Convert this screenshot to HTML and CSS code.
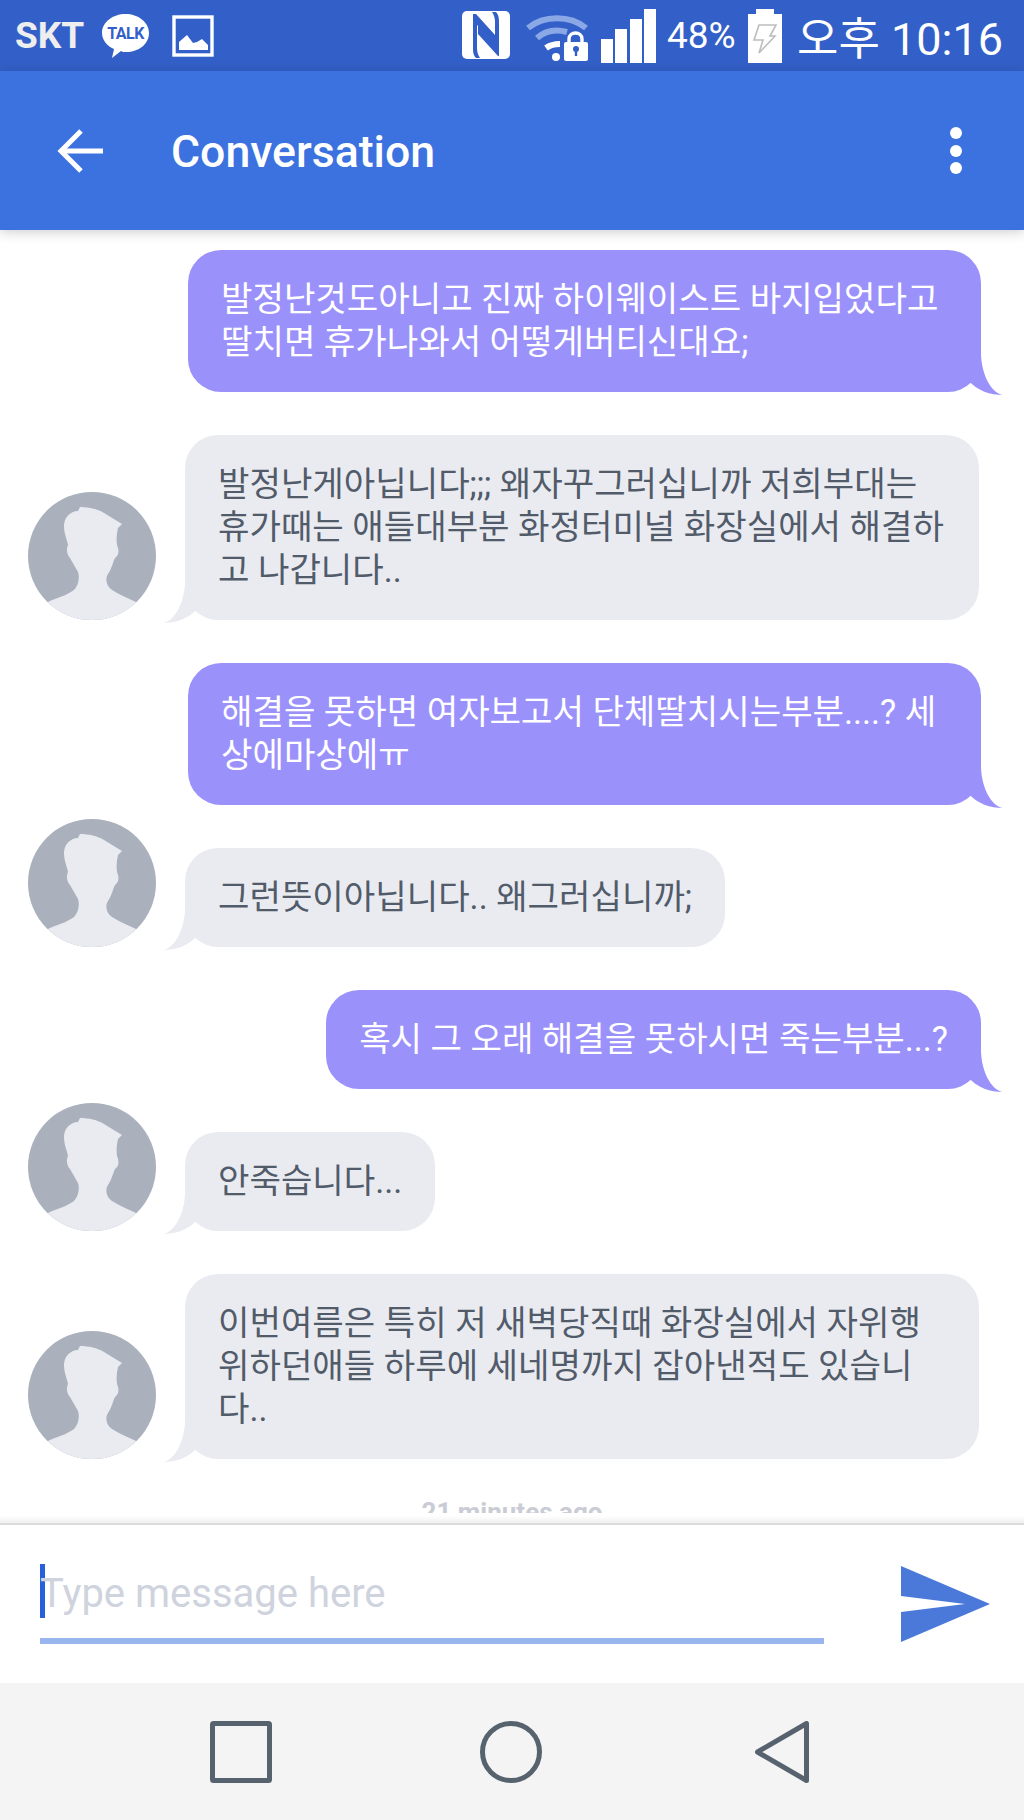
FILE: index.html
```html
<!DOCTYPE html>
<html lang="ko">
<head>
  <meta charset="UTF-8" />
  <meta name="viewport" content="width=device-width, initial-scale=1" />
  <title>Conversation</title>
  <link rel="stylesheet" href="styles.css">
</head>
<body>

  <svg class="defs" width="0" height="0">
    <defs>
      <clipPath id="avatarClip"><circle cx="64" cy="64" r="64" /></clipPath>
      <symbol id="avatar" viewBox="0 0 128 128">
        <circle cx="64" cy="64" r="64" fill="#aab1bd" />
        <path clip-path="url(#avatarClip)" fill="#e9ebf1" d="M52 15 L50 19 C42 19 36 26 36 34 C36 42 39 47 40 53 C38 57 39 63 42 66 L50 80 C52 86 50 94 46 98 C38 104 28 106 20 110 L20 128 L108 128 L108 110 C100 106 92 103 84 98 C78 94 77 86 80 82 C84 76 85 70 87 66 C90 64 92 60 89 53 C88 46 89 41 90 36 L94 32 L76 21 C70 17 60 15 52 15 Z" />
      </symbol>
      <symbol id="tail" viewBox="0 0 40 40">
        <path d="M18 0 C19 20 28 38 40 40 C28 40 14 36 5 25 L5 0 Z" />
      </symbol>
    </defs>
  </svg>

  <div class="status-bar">
    <span class="carrier">SKT</span>
    <svg class="ic-talk" width="47" height="44" viewBox="0 0 47 44">
      <path fill="#fff" d="M23.5 0 C36 0 47 8 47 19 C47 30 37 38 24 38 C22 38 20 38 19 37 L10 44 L12 35 C5 32 0 26 0 19 C0 8 11 0 23.5 0 Z" />
      <text x="23.5" y="25" text-anchor="middle" class="talk-label">TALK</text>
    </svg>
    <svg class="ic-image" width="42" height="42" viewBox="0 0 42 42">
      <rect x="2" y="2" width="38" height="38" fill="none" stroke="#fff" stroke-width="3.4" />
      <path fill="#fff" d="M7 35 L7 27 L15 20 L21 28 L25 27 L30 24 L36 30 L36 35 Z" />
    </svg>
    <svg class="ic-nfc" width="48" height="48" viewBox="0 0 48 48">
      <rect width="48" height="48" rx="5" fill="#fff" />
      <path fill="#3360c8" d="M11 3 L14 3 L33 24 L33 34 L15 14 L15 37 C15 41 16 44 18 47 L14 47 C11 44 11 40 11 36 Z" />
      <path fill="#3360c8" d="M34 1 C37 4 37 8 37 12 L37 45 L36 45 L16 23 L16 14 L33 32 L33 11 C33 7 32 4 30 1 Z" />
    </svg>
    <svg class="ic-wifi" width="62" height="50" viewBox="0 0 62 50">
      <path fill="none" stroke="#8ba8e6" stroke-width="6" d="M2 17 C18 4 44 4 60 17" />
      <path fill="none" stroke="#8ba8e6" stroke-width="6" d="M11 27 C20 19 30 18 41 21" />
      <path fill="none" stroke="#fff" stroke-width="6" d="M20 37 C24 34 29 33 34 33" />
      <circle cx="30" cy="46" r="4" fill="#fff" />
      <path fill="none" stroke="#fff" stroke-width="3.4" d="M43 32 L43 28 C43 20 56 20 56 28 L56 32" />
      <rect x="38" y="31" width="24" height="19" rx="2" fill="#fff" />
      <circle cx="50" cy="38" r="3" fill="#3360c8" />
      <rect x="48.8" y="39" width="2.4" height="6" fill="#3360c8" />
    </svg>
    <div class="signal">
      <span class="bar h1"></span>
      <span class="bar h2"></span>
      <span class="bar h3"></span>
      <span class="bar h4"></span>
    </div>
    <span class="battery-pct">48%</span>
    <svg class="ic-battery" width="34" height="54" viewBox="0 0 34 54">
      <path fill="#fff" d="M8 0 L26 0 L26 5 L34 5 L34 54 L0 54 L0 5 L8 5 Z" />
      <path fill="none" stroke="#bdbdbd" stroke-width="1.6" d="M11 16 L28 16 L22 27 L27 27 L11 44 L15 31 L6 31 Z" />
    </svg>
    <span class="clock">오후 10:16</span>
  </div>

  <div class="app-bar">
    <svg class="ic-back" width="46" height="46" viewBox="0 0 46 46">
      <path fill="none" stroke="#fff" stroke-width="5" d="M24 3 L4 23 L24 43 M4 23 L46 23" />
    </svg>
    <div class="app-title">Conversation</div>
    <div class="more">
      <span class="dot"></span>
      <span class="dot"></span>
      <span class="dot"></span>
    </div>
  </div>

  <div class="chat">
    <div class="msg mine">
      <div class="bubble">발정난것도아니고 진짜 하이웨이스트 바지입었다고 딸치면 휴가나와서 어떻게버티신대요;<svg class="tail"><use href="#tail" /></svg></div>
    </div>

    <div class="msg theirs">
      <svg class="avatar"><use href="#avatar" /></svg>
      <div class="bubble">발정난게아닙니다;;; 왜자꾸그러십니까 저희부대는 휴가때는 애들대부분 화정터미널 화장실에서 해결하고 나갑니다..<svg class="tail"><use href="#tail" /></svg></div>
    </div>

    <div class="msg mine">
      <div class="bubble">해결을 못하면 여자보고서 단체딸치시는부분....? 세상에마상에ㅠ<svg class="tail"><use href="#tail" /></svg></div>
    </div>

    <div class="msg theirs">
      <svg class="avatar"><use href="#avatar" /></svg>
      <div class="bubble">그런뜻이아닙니다.. 왜그러십니까;<svg class="tail"><use href="#tail" /></svg></div>
    </div>

    <div class="msg mine">
      <div class="bubble">혹시 그 오래 해결을 못하시면 죽는부분...?<svg class="tail"><use href="#tail" /></svg></div>
    </div>

    <div class="msg theirs">
      <svg class="avatar"><use href="#avatar" /></svg>
      <div class="bubble">안죽습니다...<svg class="tail"><use href="#tail" /></svg></div>
    </div>

    <div class="msg theirs">
      <svg class="avatar"><use href="#avatar" /></svg>
      <div class="bubble">이번여름은 특히 저 새벽당직때 화장실에서 자위행위하던애들 하루에 세네명까지 잡아낸적도 있습니다..<svg class="tail"><use href="#tail" /></svg></div>
    </div>

    <div class="time-label">21 minutes ago</div>
    <div class="fade"></div>
  </div>

  <div class="composer">
    <div class="field">
      <span class="caret"></span>
      <span class="placeholder">Type message here</span>
    </div>
    <svg class="ic-send" width="89" height="76" viewBox="0 0 89 76">
      <path fill="#4a79d9" d="M0 0 L89 38 L0 76 L0 46 L64 38 L0 30 Z" />
    </svg>
  </div>

  <div class="nav-bar">
    <svg class="nav-recent" width="62" height="62" viewBox="0 0 62 62">
      <rect x="2.5" y="2.5" width="57" height="57" rx="1" class="nav-stroke" />
    </svg>
    <svg class="nav-home" width="62" height="62" viewBox="0 0 62 62">
      <circle cx="31" cy="31" r="28.5" class="nav-stroke" />
    </svg>
    <svg class="nav-back" width="54" height="62" viewBox="0 0 54 62">
      <path d="M51.5 2.5 L51.5 59.5 L2.5 31 Z" class="nav-stroke" />
    </svg>
  </div>

</body>
</html>
```

FILE: styles.css
```css
* {
  box-sizing: border-box;
}
body {
  margin: 0;
  width: 1024px;
  height: 1820px;
  display: flex;
  flex-direction: column;
  overflow: hidden;
  background: #fff;
  font-family: Roboto, "Noto Sans CJK KR", sans-serif;
}
.defs {
  position: absolute;
}

/* status bar */
.status-bar {
  height: 71px;
  flex: none;
  display: flex;
  align-items: center;
  padding-left: 15px;
  background: #3360c8;
  color: #fff;
}
.carrier {
  width: 87px;
  font-size: 37px;
  font-weight: 700;
  color: #eee;
}
.ic-talk {
  margin-right: 23px;
}
.talk-label {
  font-family: Roboto, sans-serif;
  font-size: 16px;
  font-weight: 700;
  letter-spacing: -0.5px;
  fill: #3360c8;
}
.ic-image {
  margin-right: 248px;
}
.ic-nfc {
  margin-right: 16px;
  margin-top: -1px;
}
.ic-wifi {
  margin-right: 13px;
}
.signal {
  width: 55px;
  height: 54px;
  display: flex;
  align-items: flex-end;
  gap: 2.5px;
  margin-right: 11px;
}
.bar {
  flex: 1;
  background: #fff;
}
.h1 { height: 24px; }
.h2 { height: 34px; }
.h3 { height: 44px; }
.h4 { height: 54px; }
.battery-pct {
  width: 81px;
  font-size: 37px;
}
.ic-battery {
  margin-right: 15px;
}
.clock {
  font-size: 45px;
  white-space: nowrap;
}

/* app bar */
.app-bar {
  height: 159px;
  flex: none;
  display: flex;
  align-items: center;
  padding-left: 57px;
  position: relative;
  z-index: 2;
  background: #3c72e0;
  box-shadow: 0 2px 12px rgba(0, 0, 0, 0.2);
  color: #fff;
}
.app-title {
  margin-left: 68px;
  padding-top: 3px;
  font-size: 44.6px;
  font-weight: 500;
}
.more {
  margin-left: auto;
  margin-right: 62px;
  display: flex;
  flex-direction: column;
  gap: 5.5px;
}
.dot {
  width: 12px;
  height: 12px;
  border-radius: 50%;
  background: #fff;
}

/* messages */
.chat {
  flex: 1;
  position: relative;
  overflow: hidden;
  padding-top: 20px;
}
.msg {
  display: flex;
  align-items: flex-end;
  margin-bottom: 43px;
}
.mine {
  justify-content: flex-end;
  padding-right: 43px;
}
.theirs {
  padding-left: 28px;
}
/* avatar pokes up past a one line bubble, so it must not add to the row height */
.avatar {
  width: 128px;
  height: 128px;
  flex: none;
  margin-top: -40px;
  margin-right: 29px;
}
.bubble {
  position: relative;
  max-width: 794px;
  padding: 28px 33px;
  border-radius: 33px;
  font-size: 34.2px;
  line-height: 43px;
}
.mine .bubble {
  max-width: 793px;
  background: #9b91fb;
  color: #fff;
}
.theirs .bubble {
  background: #e9ebf1;
  color: #525b69;
}
.tail {
  position: absolute;
  bottom: -3px;
  width: 40px;
  height: 40px;
}
.mine .tail {
  right: -22px;
  fill: #9b91fb;
}
.theirs .tail {
  left: -22px;
  fill: #e9ebf1;
  transform: scaleX(-1);
}
.time-label {
  padding-top: 1px;
  text-align: center;
  font-size: 26px;
  line-height: 18px;
  font-weight: 700;
  color: #c9ccd4;
}
.fade {
  position: absolute;
  left: 0;
  right: 0;
  bottom: 0;
  height: 10px;
  background: linear-gradient(to bottom, #fff 0, #fff 3px, #efefef 100%);
}

/* message input */
.composer {
  height: 160px;
  flex: none;
  position: relative;
  display: flex;
  align-items: flex-start;
  padding-left: 40px;
  border-top: 2px solid #dcdcdc;
}
.field {
  width: 784px;
  height: 119px;
  margin-right: 77px;
  display: flex;
  align-items: flex-start;
  padding-top: 39px;
  border-bottom: 6px solid #99b5ee;
}
.caret {
  width: 5px;
  height: 54px;
  flex: none;
  background: #2a5fdc;
}
.placeholder {
  margin-left: -5px;
  padding-top: 3px;
  font-size: 40px;
  line-height: 54px;
  color: #ced3dd;
}
.ic-send {
  margin-top: 41px;
}

/* nav bar */
.nav-bar {
  height: 137px;
  flex: none;
  display: flex;
  align-items: center;
  padding-left: 210px;
  background: #f4f4f4;
}
.nav-home {
  margin-left: 208px;
}
.nav-back {
  margin-left: 213px;
}
.nav-stroke {
  fill: none;
  stroke: #56636f;
  stroke-width: 5;
  stroke-linejoin: round;
}
```
